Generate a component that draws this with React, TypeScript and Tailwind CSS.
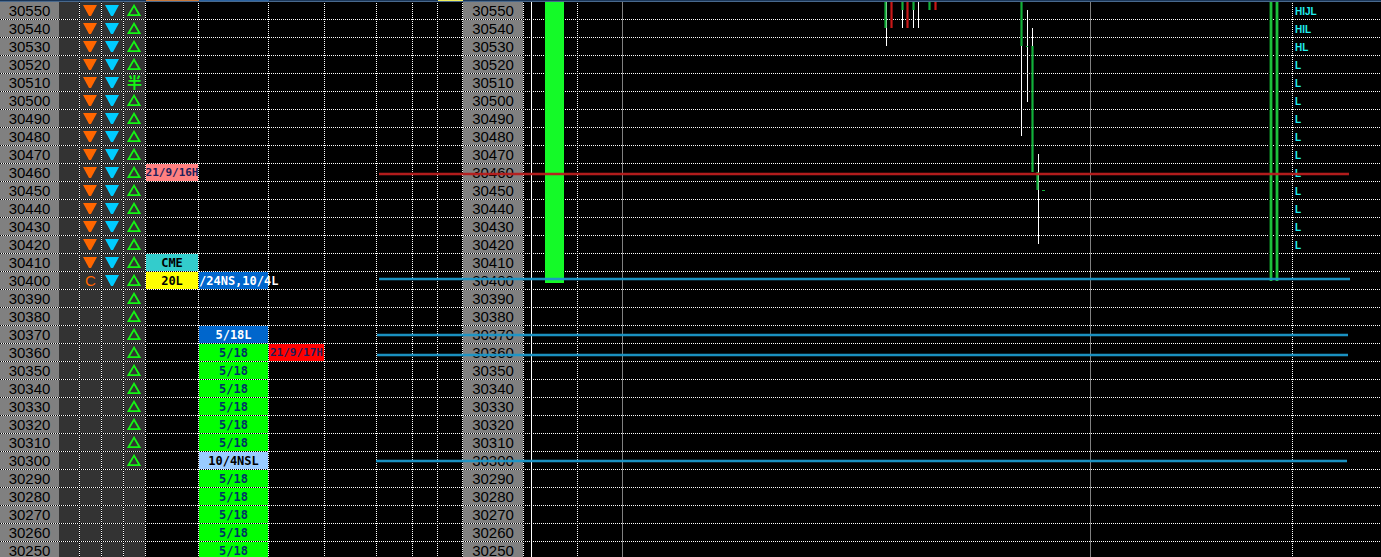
import React from "react";

type Tone = "salmon" | "teal" | "yellow" | "blue" | "green" | "sky" | "red";

interface Tag {
  text: string;
  tone: Tone;
  flow?: boolean;
}

const TONES: Record<Tone, string> = {
  salmon: "bg-[#ff8080] text-[#1f1f5c]",
  teal: "bg-[#33cccc] text-black",
  yellow: "bg-[#ffff00] text-black",
  blue: "bg-[#0066cc] text-white",
  green: "bg-[#00ff00] text-[#003366]",
  sky: "bg-[#99ccff] text-black",
  red: "bg-[#ff0000] text-[#1f1f5c]",
};

const TOP_PRICE = 30550;
const PRICES = Array.from({ length: 31 }, (_, i) => TOP_PRICE - i * 10);

const SESSION: Record<number, Tag> = {
  30460: { text: "21/9/16H", tone: "salmon" },
  30410: { text: "CME", tone: "teal" },
  30400: { text: "20L", tone: "yellow" },
};

const LEVELS: Record<number, Tag> = {
  30400: { text: "/24NS,10/4L", tone: "blue", flow: true },
  30370: { text: "5/18L", tone: "blue" },
  30300: { text: "10/4NSL", tone: "sky" },
};

const EXTRA: Record<number, Tag> = {
  30360: { text: "21/9/17H", tone: "red" },
};

const levelFor = (price: number): Tag | undefined =>
  LEVELS[price] ?? (price < 30370 ? { text: "5/18", tone: "green" } : undefined);

const profileFor = (price: number): string => {
  if (price === 30550) return "HIJL";
  if (price === 30540) return "HIL";
  if (price === 30530) return "HL";
  return price >= 30420 ? "L" : "";
};

const DOTS_X =
  "bg-[repeating-linear-gradient(90deg,#000_0_1px,#fff_1px_2px)] bg-[length:100%_1px] bg-bottom bg-no-repeat";
const DOTS_Y =
  "bg-[repeating-linear-gradient(180deg,#000_0_1px,#fff_1px_2px)] bg-[length:1px_100%] bg-right bg-no-repeat";

type Edge = "dots" | "white" | "gray" | "none";

const EDGES: Record<Edge, string> = {
  dots: `${DOTS_Y} pr-px`,
  white: "border-r border-white",
  gray: "border-r border-[#808080]",
  none: "",
};

function Cell({ edge = "dots", fill = "", children }: { edge?: Edge; fill?: string; children?: React.ReactNode }) {
  return (
    <td className={`h-[18px] p-0 pb-px ${EDGES[edge]}`}>
      <div className={`flex h-[17px] items-center justify-center whitespace-nowrap ${fill}`}>{children}</div>
    </td>
  );
}

function TagCell({ tag }: { tag?: Tag }) {
  if (!tag) return <Cell />;
  const dated = tag.tone === "salmon" || tag.tone === "red";
  return (
    <Cell fill={TONES[tag.tone]}>
      <span
        className={`font-['DejaVu_Sans_Mono',monospace] leading-4 font-bold ${dated ? "text-[11px]" : "text-[12px]"} ${tag.flow ? "relative w-full" : ""}`}
      >
        {tag.text}
      </span>
    </Cell>
  );
}

function Down({ className }: { className: string }) {
  return (
    <svg className={className} width="15" height="13" viewBox="0 0 15 13" aria-hidden="true">
      <path d="M0 1H14L8 12H6Z" fill="currentColor" />
    </svg>
  );
}

function Up() {
  return (
    <svg className="text-[#14f514]" width="15" height="13" viewBox="0 0 15 13" aria-hidden="true">
      <path d="M7 1.6L1.4 11.2H12.6Z" fill="none" stroke="currentColor" strokeWidth="1.8" />
    </svg>
  );
}

function PriceRow({ price }: { price: number }) {
  const label = <span className="text-[15px] leading-4 text-black">{price}</span>;
  return (
    <tr className={DOTS_X}>
      <Cell edge="none" fill="bg-[#808080]">{label}</Cell>
      <Cell fill="bg-[#333333]" />
      <Cell fill="bg-[#333333]">
        {price > 30400 && <Down className="text-[#ff6600]" />}
        {price === 30400 && <span className="text-[15px] leading-4 text-[#ff6600]">C</span>}
      </Cell>
      <Cell fill="bg-[#333333]">{price >= 30400 && <Down className="text-[#00ccff]" />}</Cell>
      <Cell fill="bg-[#333333]">
        {price === 30510 ? (
          <span className="text-[15px] leading-4 font-bold text-[#14f514]">半</span>
        ) : (
          price >= 30300 && <Up />
        )}
      </Cell>
      <TagCell tag={SESSION[price]} />
      <TagCell tag={levelFor(price)} />
      <TagCell tag={EXTRA[price]} />
      <Cell />
      <Cell />
      <Cell />
      <Cell />
      <Cell fill="bg-[#808080]">{label}</Cell>
      <Cell edge="white" />
      <Cell />
      <Cell edge="gray" />
      <Cell edge="gray" />
      <Cell />
      <Cell edge="none">
        <span className="w-full pt-0.5 pl-0.5 text-[10px] leading-3 font-bold text-[#22f0f0]">{profileFor(price)}</span>
      </Cell>
    </tr>
  );
}

const COLUMNS = [
  "w-[59px]", "w-[21px]", "w-[22px]", "w-[22px]", "w-[22px]", "w-[53px]", "w-[70px]",
  "w-[56px]", "w-[52px]", "w-[36px]", "w-[25px]", "w-[25px]", "w-[61px]", "w-[8px]",
  "w-[46px]", "w-[45px]", "w-[468px]", "w-[202px]", "",
];

const HEAD_FILL: Record<number, string> = {
  5: "bg-[#c8793c]",
  6: "bg-[#2a62a0]",
  11: "bg-[#f0f060]",
};

const GREEN = "#12b03a";
const RED = "#c81818";

const WICKS = [
  [886, 0, 44], [902, 0, 26], [913, 0, 26], [918, 0, 26],
  [1021, 44, 90], [1027, 8, 92], [1032, 26, 20], [1038, 152, 90],
];

const BODIES: [number, number, number, string][] = [
  [884, 0, 26, GREEN], [890, 0, 26, RED], [901, 0, 8, GREEN], [906, 0, 26, RED],
  [912, 0, 8, GREEN], [928, 0, 8, GREEN], [934, 0, 8, RED],
  [1020, 0, 44, GREEN], [1031, 44, 126, GREEN], [1036, 170, 18, GREEN],
];

const LINES: [number, number, number, string][] = [
  [379, 171, 970, "#b81e1e"],
  [379, 276, 971, "#1b96c8"],
  [377, 332, 971, "#1b96c8"],
  [377, 352, 971, "#1b96c8"],
  [376, 458, 971, "#1b96c8"],
];

function Chart() {
  return (
    <svg className="pointer-events-none absolute inset-0 h-full w-full" shapeRendering="crispEdges" role="img" aria-label="Price chart">
      <rect x="545" y="0" width="19" height="281" fill="#14fa28" />
      {[1270, 1276].map((x) => (
        <g key={x}>
          <rect x={x - 1} y="0" width="4" height="279" fill="#074d15" />
          <rect x={x} y="0" width="2" height="279" fill="#1dc03c" />
        </g>
      ))}
      {WICKS.map(([x, y, h]) => (
        <rect key={x} x={x} y={y} width="1" height={h} fill="#ffffff" />
      ))}
      {BODIES.map(([x, y, h, color]) => (
        <g key={x} fill={color}>
          <rect x={x} y={y} width="3" height={h} opacity="0.6" />
          <rect x={x + 1} y={y} width="1" height={h} />
        </g>
      ))}
      <rect x="1026" y="44" width="2" height="1" fill={GREEN} />
      <rect x="1042" y="188" width="3" height="1" fill={GREEN} />
      {LINES.map(([x, y, w, color]) => (
        <g key={y}>
          <rect x={x} y={y - 1} width={w} height="4" fill={color} opacity="0.25" />
          <rect x={x} y={y} width={w} height="2" fill={color} opacity="0.95" />
        </g>
      ))}
    </svg>
  );
}

export default function App() {
  return (
    <main className="h-screen overflow-hidden bg-black font-['Liberation_Sans','Noto_Sans_CJK_JP',sans-serif]">
      <div className="relative">
        <table className="w-full table-fixed border-separate border-spacing-0">
          <colgroup>
            {COLUMNS.map((width, i) => (
              <col key={i} className={width} />
            ))}
          </colgroup>
          <thead>
            <tr>
              {COLUMNS.map((_, i) => (
                <td key={i} className={`h-[2px] border-b border-[#48688c] p-0 ${HEAD_FILL[i] ?? "bg-[#1a3658]"}`} />
              ))}
            </tr>
          </thead>
          <tbody>
            {PRICES.map((price) => (
              <PriceRow key={price} price={price} />
            ))}
          </tbody>
        </table>
        <div className="absolute inset-x-0 top-[2px] bottom-0">
          <Chart />
        </div>
      </div>
    </main>
  );
}
